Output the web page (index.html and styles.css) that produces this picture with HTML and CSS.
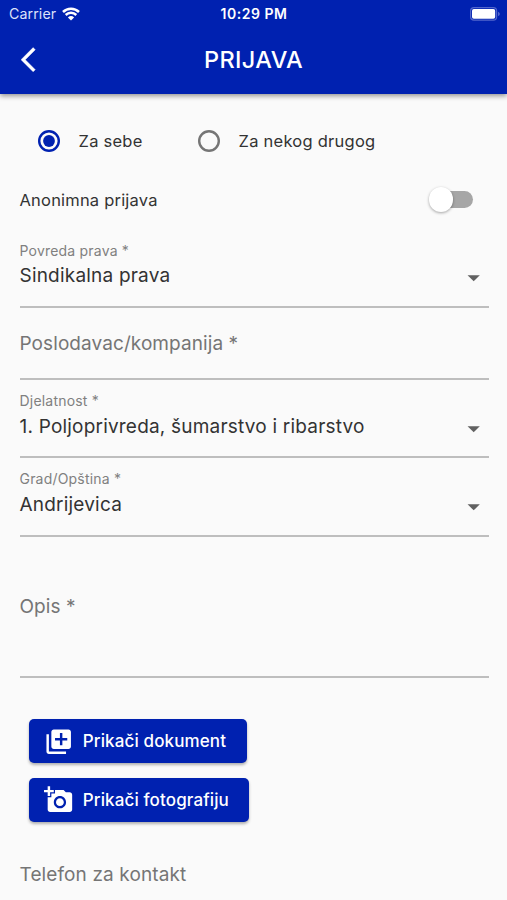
FILE: index.html
```html
<!DOCTYPE html>
<html lang="sr-Latn">
<head>
<meta charset="utf-8">
<title>Prijava</title>
<link rel="stylesheet" href="styles.css">
</head>
<body>
<header class="appbar">
  <div class="status">
    <div class="carrier"><span>Carrier</span>
      <svg class="wifi" viewBox="0 0 18 14"><path d="M9 13.6 5.9 10.4a4.5 4.5 0 0 1 6.2 0z" fill="#fff"/><path d="M3.7 8a7.6 7.6 0 0 1 10.6 0M1 5a11.4 11.4 0 0 1 16 0" fill="none" stroke="#fff" stroke-width="2.5"/></svg>
    </div>
    <span class="clock">10:29 PM</span>
    <svg class="battery" viewBox="0 0 30 14"><rect x=".6" y=".6" width="26" height="12.6" rx="3.4" fill="none" stroke="#5266cc" stroke-width="1.2"/><rect x="2" y="2" width="23.2" height="9.8" rx="1.8" fill="#fff"/><path d="M28 4.7c2.4.8 2.4 3.6 0 4.4z" fill="#5266cc"/></svg>
  </div>
  <div class="titlebar">
    <svg class="icon" viewBox="0 0 24 24"><path d="M11.67 3.87 9.9 2.1 0 12l9.9 9.9 1.77-1.77L3.54 12z"/></svg>
    <h1>PRIJAVA</h1>
  </div>
</header>
<main>
  <div class="choices">
    <label class="choice first"><svg class="radio on" viewBox="0 0 22 22"><circle class="ring" cx="11" cy="11" r="9.8"/><circle class="dot" cx="11" cy="11" r="5.9"/></svg><span>Za sebe</span></label>
    <label class="choice"><svg class="radio" viewBox="0 0 22 22"><circle class="ring" cx="11" cy="11" r="9.8"/></svg><span>Za nekog drugog</span></label>
  </div>
  <div class="anonymous"><span>Anonimna prijava</span><span class="switch"></span></div>
  <div class="field violation">
    <div class="label">Povreda prava *</div>
    <div class="value"><span>Sindikalna prava</span><svg class="icon" viewBox="0 0 24 24"><path d="m7 10 5 5 5-5z"/></svg></div>
  </div>
  <div class="field empty employer"><span>Poslodavac/kompanija *</span></div>
  <div class="field activity">
    <div class="label">Djelatnost *</div>
    <div class="value"><span>1. Poljoprivreda, šumarstvo i ribarstvo</span><svg class="icon" viewBox="0 0 24 24"><path d="m7 10 5 5 5-5z"/></svg></div>
  </div>
  <div class="field city">
    <div class="label">Grad/Opština *</div>
    <div class="value"><span>Andrijevica</span><svg class="icon" viewBox="0 0 24 24"><path d="m7 10 5 5 5-5z"/></svg></div>
  </div>
  <div class="field empty description"><span>Opis *</span></div>
  <div class="actions">
    <button class="doc"><svg class="icon" viewBox="0 0 24 24"><path d="M4 6H2v14c0 1.1.9 2 2 2h14v-2H4V6zm16-4H8c-1.1 0-2 .9-2 2v12c0 1.1.9 2 2 2h12c1.1 0 2-.9 2-2V4c0-1.1-.9-2-2-2zm-1 9h-4v4h-2v-4H9V9h4V5h2v4h4v2z"/></svg><span>Prikači dokument</span></button>
    <button class="photo"><svg class="icon" viewBox="0 0 24 24"><path d="M3 4V1h2v3h3v2H5v3H3V6H0V4h3zm3 6V7h3V4h7l1.83 2H21c1.1 0 2 .9 2 2v12c0 1.1-.9 2-2 2H5c-1.1 0-2-.9-2-2V10h3zm7 9c2.76 0 5-2.24 5-5s-2.24-5-5-5-5 2.24-5 5 2.24 5 5 5zm-3.2-5c0 1.77 1.43 3.2 3.2 3.2s3.2-1.43 3.2-3.2-1.43-3.2-3.2-3.2-3.2 1.43-3.2 3.2z"/></svg><span>Prikači fotografiju</span></button>
  </div>
  <div class="phone"><span>Telefon za kontakt</span></div>
</main>
</body>
</html>
```
FILE: styles.css
```css
* { box-sizing: border-box; }
html, body { height: 900px; overflow: hidden; }
body { margin: 0; background: #fafafa; color: #333; font-family: Inter, "Liberation Sans", sans-serif; }
span, .label { white-space: nowrap; }
.icon { width: 29.4px; height: 29.4px; flex: none; fill: currentColor; }

.appbar { height: 93.5px; background: #0021b0; color: #fff; box-shadow: 0 2px 5px rgba(0, 0, 0, .42); }
.status { height: 27px; display: grid; grid-template-columns: 1fr auto 1fr; align-items: center; padding: 0 8px 0 9px; }
.carrier { display: flex; align-items: center; gap: 6px; font-size: 14.2px; letter-spacing: .1px; color: #dde2fa; }
.wifi { width: 18px; height: 14px; }
.clock { font-size: 14px; font-weight: 600; letter-spacing: .5px; }
.battery { width: 30px; height: 14px; justify-self: end; margin-right: -1px; }
.titlebar { height: 66px; display: grid; grid-template-columns: 60px 1fr 60px; align-items: center; }
.titlebar .icon { margin-left: 20.8px; stroke: currentColor; stroke-width: .3px; }
h1 { margin: 0; text-align: center; font-size: 23.5px; line-height: 30px; font-weight: 500; letter-spacing: .4px; }

main { padding: 0 18.5px 0 19.5px; }
.choices { height: 76px; padding-top: 19px; display: flex; align-items: center; font-size: 16.5px; letter-spacing: .25px; }
.choice { display: flex; align-items: center; gap: 19px; margin-left: 18px; }
.choice.first { width: 142px; }
.radio { width: 22px; height: 22px; flex: none; color: #757575; }
.radio.on { color: #0021b0; }
.ring { fill: none; stroke: currentColor; stroke-width: 2.4px; }
.dot { fill: currentColor; }
.anonymous { height: 60px; display: flex; align-items: center; justify-content: space-between; font-size: 16.5px; letter-spacing: .2px; }
.switch { width: 41px; height: 17px; margin-right: 15.5px; border-radius: 9px; background: #a6a6a6; display: flex; align-items: center; }
.switch::before { content: ""; width: 24.5px; height: 24.5px; margin-left: -3.5px; flex: none; border-radius: 50%; background: #fff; box-shadow: 0 1px 3px rgba(0, 0, 0, .35); }

.field { border-bottom: 2px solid #bebebe; }
.label { height: 18px; line-height: 18px; font-size: 14px; letter-spacing: .2px; color: #808080; }
.value { height: 32px; display: flex; align-items: center; justify-content: space-between; font-size: 19px; letter-spacing: .2px; }
.value .icon { color: #616161; margin-top: 5px; }
.violation { height: 78.5px; padding-top: 12px; }
.empty { display: flex; align-items: center; font-size: 19px; letter-spacing: .08px; color: #757575; }
.employer { height: 72px; }
.activity, .city { height: 78.3px; padding-top: 12px; }
.description { height: 141.5px; }

.actions { height: 144px; padding: 41.2px 0 0 9.5px; display: flex; flex-direction: column; align-items: flex-start; gap: 15px; }
button { height: 44px; border: 0; border-radius: 5px; padding: 0 0 0 14.6px; display: flex; align-items: center; gap: 9.8px; background: #0021b0; color: #fff; font: 500 17px/24px Inter, "Liberation Sans", sans-serif; letter-spacing: .12px; box-shadow: 0 2px 3px rgba(0, 0, 0, .3); }
.doc { width: 217.5px; }
.photo { width: 220px; }
.phone { padding-top: 41px; font-size: 19px; line-height: 24px; letter-spacing: .12px; color: #757575; }
```
